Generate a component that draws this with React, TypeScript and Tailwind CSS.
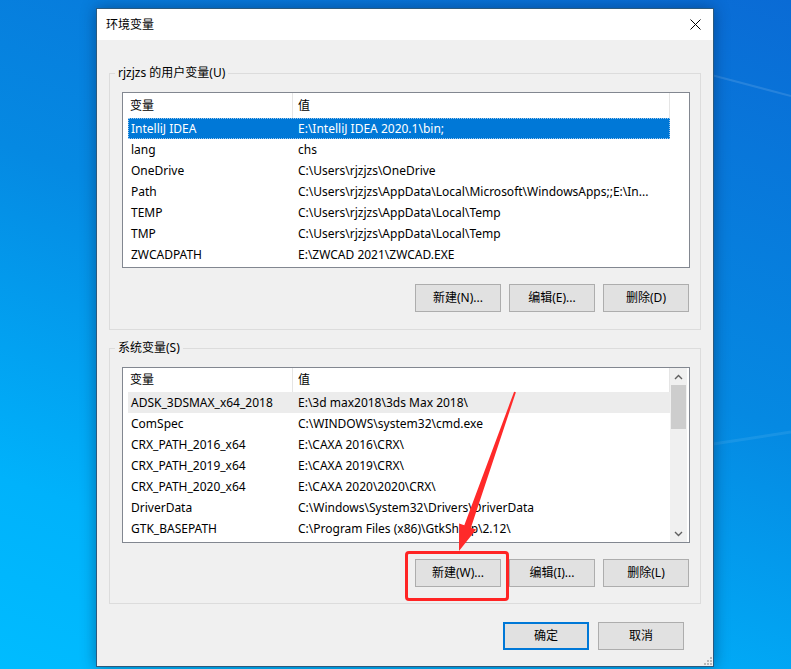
import React from 'react'

type Row = [string, string]

const userVars: Row[] = [
  ['IntelliJ IDEA', 'E:\\IntelliJ IDEA 2020.1\\bin;'],
  ['lang', 'chs'],
  ['OneDrive', 'C:\\Users\\rjzjzs\\OneDrive'],
  ['Path', 'C:\\Users\\rjzjzs\\AppData\\Local\\Microsoft\\WindowsApps;;E:\\In...'],
  ['TEMP', 'C:\\Users\\rjzjzs\\AppData\\Local\\Temp'],
  ['TMP', 'C:\\Users\\rjzjzs\\AppData\\Local\\Temp'],
  ['ZWCADPATH', 'E:\\ZWCAD 2021\\ZWCAD.EXE'],
]

const sysVars: Row[] = [
  ['ADSK_3DSMAX_x64_2018', 'E:\\3d max2018\\3ds Max 2018\\'],
  ['ComSpec', 'C:\\WINDOWS\\system32\\cmd.exe'],
  ['CRX_PATH_2016_x64', 'E:\\CAXA 2016\\CRX\\'],
  ['CRX_PATH_2019_x64', 'E:\\CAXA 2019\\CRX\\'],
  ['CRX_PATH_2020_x64', 'E:\\CAXA 2020\\2020\\CRX\\'],
  ['DriverData', 'C:\\Windows\\System32\\Drivers\\DriverData'],
  ['GTK_BASEPATH', 'C:\\Program Files (x86)\\GtkSharp\\2.12\\'],
]

function Button({ label, primary }: { label: string; primary?: boolean }) {
  return (
    <div
      className={
        'w-[86px] h-[28px] flex items-center justify-center bg-[#e1e1e1] text-[12px] text-black ' +
        (primary ? 'border-2 border-[#0078d7]' : 'border border-[#adadad]')
      }
    >
      {label}
    </div>
  )
}

function Scrollbar() {
  return (
    <div className="w-[17px] h-full bg-[#f0f0f0] flex flex-col">
      <div className="h-[17px] flex items-center justify-center">
        <svg width="9" height="6" viewBox="0 0 9 6">
          <path d="M1 5 L4.5 1.5 L8 5" fill="none" stroke="#606060" strokeWidth="1.4" />
        </svg>
      </div>
      <div className="h-[44px] mx-[1px] bg-[#cdcdcd]" />
      <div className="flex-1" />
      <div className="h-[17px] flex items-center justify-center">
        <svg width="9" height="6" viewBox="0 0 9 6">
          <path d="M1 1 L4.5 4.5 L8 1" fill="none" stroke="#606060" strokeWidth="1.4" />
        </svg>
      </div>
    </div>
  )
}

function VarList({ rows, focused, scroll, headerH }: { rows: Row[]; focused: boolean; scroll?: boolean; headerH: string }) {
  return (
    <div className="ml-[12px] w-[568px] h-[176px] border border-[#828790] bg-white flex overflow-hidden">
      <div className="w-[547px] flex flex-col">
        <div className={'flex ' + headerH}>
          <div className="w-[170px] pl-[7px] flex items-center border-r border-[#e5e5e5]">变量</div>
          <div className="flex-1 pl-[5px] flex items-center border-r border-[#e5e5e5]">值</div>
        </div>
        {rows.map(([name, value], i) => {
          const sel = i === 0
          const cls = sel
            ? focused
              ? 'bg-[#0078d7] text-white border-dotted border-[#9cc8ee]'
              : 'bg-[#ececec] border-transparent'
            : 'border-transparent'
          return (
            <div key={name} className={'ml-[5px] w-[542px] h-[21px] flex items-center border ' + cls}>
              <div className="w-[166px] pl-[2px] whitespace-nowrap">{name}</div>
              <div className="flex-1 pl-[3px] whitespace-nowrap overflow-hidden">{value}</div>
            </div>
          )
        })}
      </div>
      <div className="w-[17px]">{scroll ? <Scrollbar /> : null}</div>
    </div>
  )
}

function Group({
  title,
  rows,
  focused,
  scroll,
  buttons,
  className,
  listMt,
  headerH,
}: {
  title: string
  rows: Row[]
  focused: boolean
  scroll?: boolean
  buttons: string[]
  className: string
  listMt: string
  headerH: string
}) {
  return (
    <fieldset className={'border border-[#dcdcdc] ' + className}>
      <legend className="ml-[5px] px-[3px] leading-[16px] text-[12px]">{title}</legend>
      <div className={listMt}>
        <VarList rows={rows} focused={focused} scroll={scroll} headerH={headerH} />
      </div>
      <div className="mt-[16px] mr-[11px] flex justify-end gap-[8px]">
        {buttons.map((b) => (
          <Button key={b} label={b} />
        ))}
      </div>
    </fieldset>
  )
}

export default function App() {
  return (
    <div
      className="relative w-[791px] h-[669px] overflow-hidden bg-[linear-gradient(200deg,#0a6bd5_0%,#0589e2_45%,#00b2fb_80%,#00bcff_100%)] text-[12px] text-black"
      style={{ fontFamily: '"Microsoft YaHei UI", "Noto Sans", "Noto Sans CJK SC", sans-serif' }}
    >
      {/* faint wallpaper streaks */}
      <svg className="absolute inset-0" width="791" height="669">
        <path d="M700 72 L791 96" stroke="#ffffff" strokeOpacity="0.12" strokeWidth="2" />
        <path d="M700 446 L791 432" stroke="#ffffff" strokeOpacity="0.08" strokeWidth="3" />
      </svg>

      {/* window */}
      <div className="absolute left-[96px] top-[8px] w-[618px] h-[659px] border border-[#2b5a7e] bg-[#f0f0f0] flex flex-col shadow-[0_0_14px_rgba(0,30,70,0.45)]">
        <div className="h-[31px] bg-white flex items-center justify-between pl-[9px]">
          <span>环境变量</span>
          <div className="w-[46px] h-full flex items-center justify-center mr-[-5px]">
            <svg width="11" height="11" viewBox="0 0 11 11">
              <path d="M0.5 0.5 L10.5 10.5 M10.5 0.5 L0.5 10.5" stroke="#000" strokeWidth="1" />
            </svg>
          </div>
        </div>

        <div className="flex-1 px-[12px] pt-[25px] flex flex-col relative">
          <Group
            title="rjzjzs 的用户变量(U)"
            rows={userVars}
            focused
            buttons={['新建(N)...', '编辑(E)...', '删除(D)']}
            className="pb-[17px]"
            listMt="mt-[11px]"
            headerH="h-[25px]"
          />
          <Group
            title="系统变量(S)"
            rows={sysVars}
            focused={false}
            scroll
            buttons={['新建(W)...', '编辑(I)...', '删除(L)']}
            className="mt-[10px] pb-[16px]"
            listMt="mt-[11px]"
            headerH="h-[24px]"
          />
          <div className="mt-[18px] mr-[17px] flex justify-end gap-[9px]">
            <Button label="确定" primary />
            <Button label="取消" />
          </div>

          {/* resize grip */}
          <svg className="absolute right-[1px] bottom-[1px]" width="9" height="9" viewBox="0 0 9 9">
            <rect x="7" y="1" width="2" height="2" fill="#b8b8b8" />
            <rect x="4" y="4" width="2" height="2" fill="#b8b8b8" />
            <rect x="7" y="4" width="2" height="2" fill="#b8b8b8" />
            <rect x="1" y="7" width="2" height="2" fill="#b8b8b8" />
            <rect x="4" y="7" width="2" height="2" fill="#b8b8b8" />
            <rect x="7" y="7" width="2" height="2" fill="#b8b8b8" />
          </svg>
        </div>
      </div>

      {/* red annotation */}
      <div className="absolute left-[405px] top-[551px] w-[104px] h-[50px] border-[3px] border-[#ff2424] rounded-[4px]" />
      <svg className="absolute inset-0 pointer-events-none" width="791" height="669">
        <polygon
          points="514.1,391.7 515.9,392.3 470.9,527.7 476.1,529.5 459,551 459.1,523.5 464.3,525.3"
          fill="#ff2a2a"
        />
      </svg>
    </div>
  )
}
